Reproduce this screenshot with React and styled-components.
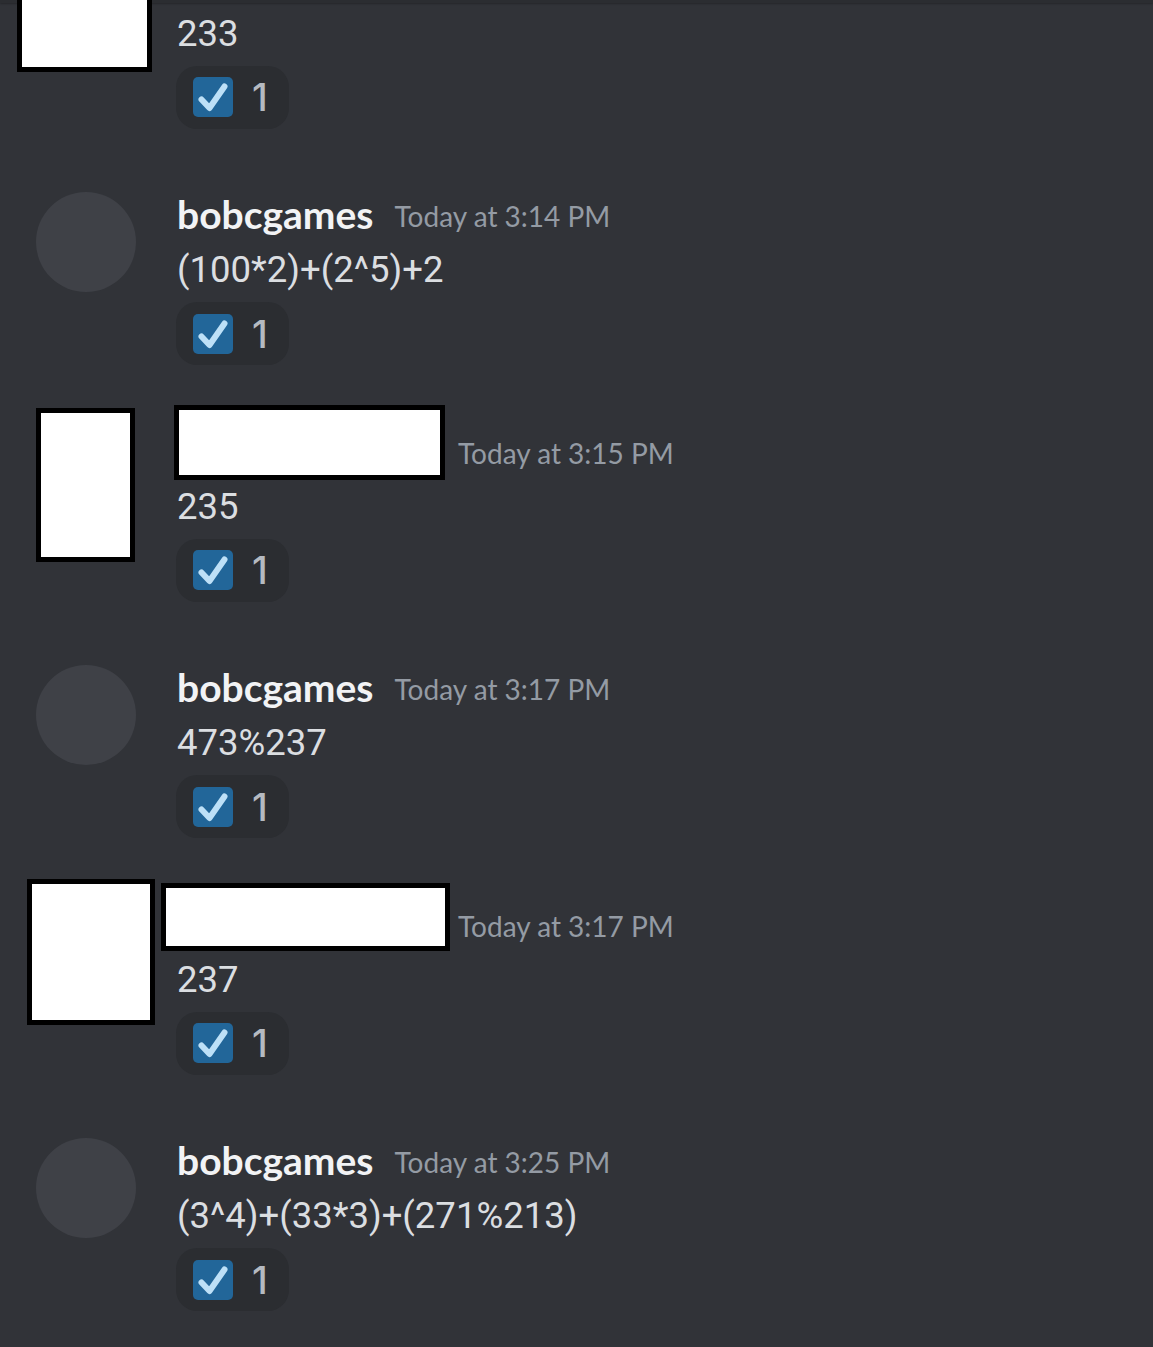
import React from "react";
import styled, { createGlobalStyle } from "styled-components";

const GlobalStyle = createGlobalStyle`
  html, body {
    margin: 0;
    padding: 0;
    background: #313338;
  }
  body {
    font-family: "Lato", "Noto Sans", sans-serif;
  }
`;

const Page = styled.div`
  position: relative;
  width: 1153px;
  height: 1347px;
  overflow: hidden;
  background: #313338;
`;

const TopBar = styled.div`
  position: relative;
  z-index: 1;
  height: 3px;
  background: #2b2d31;
  box-shadow: 0 1px 2px rgba(0, 0, 0, 0.25);
`;

const List = styled.div`
  display: flex;
  flex-direction: column;
  margin-top: -106px;
`;

const Message = styled.div`
  display: grid;
  grid-template-columns: 100px 1fr;
  column-gap: 41px;
  padding: 53.5px 0 5px 36px;
`;

const AvatarSlot = styled.div`
  position: relative;
  width: 100px;
  height: 100px;
  margin-top: 5px;
`;

const Avatar = styled.div`
  width: 100px;
  height: 100px;
  border-radius: 50%;
  background: #3f4147;
`;

const Redaction = styled.div`
  position: absolute;
  z-index: 2;
  box-sizing: border-box;
  left: ${(p) => p.$x}px;
  top: ${(p) => p.$y}px;
  width: ${(p) => p.$w}px;
  height: ${(p) => p.$h}px;
  background: #ffffff;
  border: 5px solid #000000;
`;

const Body = styled.div`
  display: flex;
  flex-direction: column;
  min-width: 0;
`;

const Header = styled.div`
  display: flex;
  align-items: center;
  height: 55px;
  gap: 21px;
  white-space: nowrap;
`;

const Username = styled.span`
  position: relative;
  font-family: "Lato", sans-serif;
  font-weight: 700;
  font-size: 39px;
  color: #f2f3f5;
  width: ${(p) => (p.$w ? `${p.$w}px` : "auto")};
  height: 55px;
  line-height: 55px;
`;

const Timestamp = styled.span`
  font-family: "Lato", sans-serif;
  font-size: 28px;
  color: #949ba4;
  line-height: 55px;
  padding-top: 4px;
`;

const Content = styled.div`
  font-family: "Roboto", sans-serif;
  font-size: 36.5px;
  color: #dbdee1;
  height: 55px;
  line-height: 55px;
  white-space: nowrap;
`;

const Reactions = styled.div`
  display: flex;
  margin-top: 5px;
  margin-left: -1px;
`;

const Reaction = styled.div`
  display: flex;
  align-items: center;
  gap: 19px;
  height: 63px;
  box-sizing: border-box;
  padding: 0 21px 0 17px;
  border-radius: 21px;
  background: #2b2d31;
`;

const Emoji = styled.svg`
  width: 40px;
  height: 40px;
  display: block;
`;

const Count = styled.span`
  font-family: "Inter", sans-serif;
  font-weight: 500;
  font-size: 38px;
  color: #b5bac1;
  line-height: 1;
`;

const CheckBox = () => (
  <Emoji viewBox="0 0 40 40">
    <rect x="0" y="0" width="40" height="40" rx="5" fill="#226699" />
    <path
      d="M8.5 22.5 L16.5 31 L31.5 9.5"
      fill="none"
      stroke="#bde0f7"
      strokeWidth="6"
      strokeLinecap="round"
      strokeLinejoin="round"
    />
  </Emoji>
);

const messages = [
  {
    id: 0,
    redacted: true,
    content: "233",
    avatarBox: { x: -19, y: -70, w: 135, h: 186.5 },
  },
  {
    id: 1,
    name: "bobcgames",
    time: "Today at 3:14 PM",
    content: "(100*2)+(2^5)+2",
  },
  {
    id: 2,
    redacted: true,
    time: "Today at 3:15 PM",
    content: "235",
    avatarBox: { x: 0, y: -20.5, w: 99, h: 154 },
    nameBox: { x: -3, y: -18.5, w: 271, h: 75 },
  },
  {
    id: 3,
    name: "bobcgames",
    time: "Today at 3:17 PM",
    content: "473%237",
  },
  {
    id: 4,
    redacted: true,
    time: "Today at 3:17 PM",
    content: "237",
    avatarBox: { x: -9.5, y: -22.5, w: 128, h: 146 },
    nameBox: { x: -16, y: -13.5, w: 289, h: 68 },
  },
  {
    id: 5,
    name: "bobcgames",
    time: "Today at 3:25 PM",
    content: "(3^4)+(33*3)+(271%213)",
  },
];

const Box = ({ box }) =>
  box ? <Redaction $x={box.x} $y={box.y} $w={box.w} $h={box.h} /> : null;

export default function App() {
  return (
    <>
      <GlobalStyle />
      <Page>
        <TopBar />
        <List>
          {messages.map((m) => (
            <Message key={m.id}>
              <AvatarSlot>
                {m.redacted ? <Box box={m.avatarBox} /> : <Avatar />}
              </AvatarSlot>
              <Body>
                <Header>
                  {m.redacted ? (
                    <Username $w={260}>
                      <Box box={m.nameBox} />
                    </Username>
                  ) : (
                    <Username>{m.name}</Username>
                  )}
                  {m.time && <Timestamp>{m.time}</Timestamp>}
                </Header>
                <Content>{m.content}</Content>
                <Reactions>
                  <Reaction>
                    <CheckBox />
                    <Count>1</Count>
                  </Reaction>
                </Reactions>
              </Body>
            </Message>
          ))}
        </List>
      </Page>
    </>
  );
}
